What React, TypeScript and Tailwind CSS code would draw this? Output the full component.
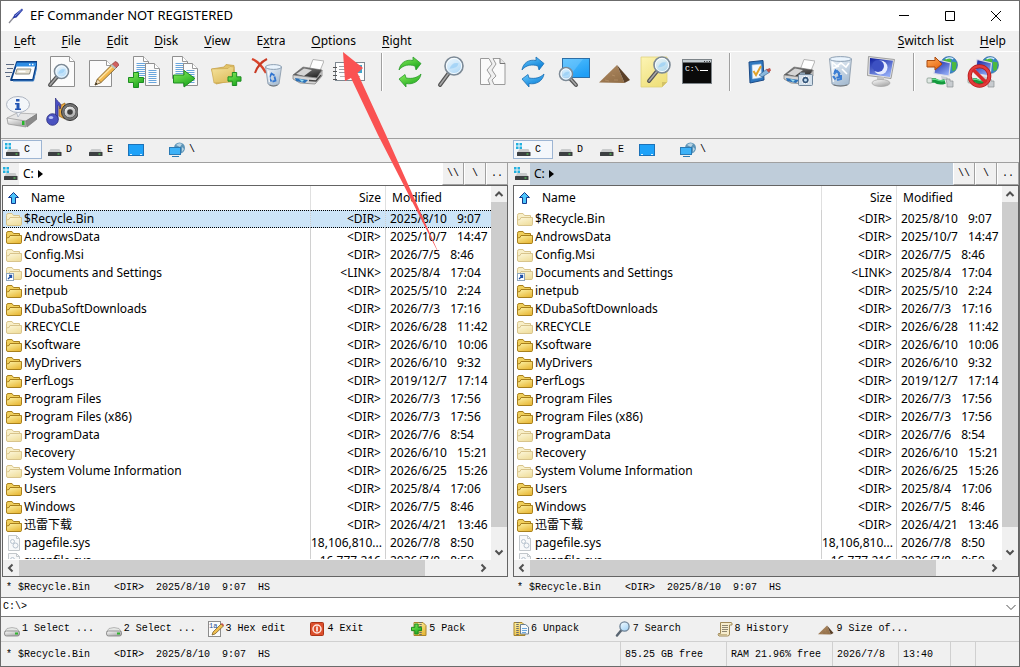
import type { ReactNode } from 'react';

const MONO = "font-['Liberation_Mono','Noto_Sans_CJK_SC',monospace] text-[10px]";

interface Entry {
  name: string;
  size: string;
  date: string;
  time: string;
  kind: 'folder' | 'hidden' | 'link' | 'file';
}

const dir = (name: string, date: string, time: string, kind: Entry['kind'] = 'folder'): Entry => ({
  name,
  size: kind === 'link' ? '<LINK>' : '<DIR>',
  date,
  time,
  kind,
});

const ENTRIES: Entry[] = [
  dir('$Recycle.Bin', '2025/8/10', '9:07', 'hidden'),
  dir('AndrowsData', '2025/10/7', '14:47'),
  dir('Config.Msi', '2026/7/5', '8:46', 'hidden'),
  dir('Documents and Settings', '2025/8/4', '17:04', 'link'),
  dir('inetpub', '2025/5/10', '2:24'),
  dir('KDubaSoftDownloads', '2026/7/3', '17:16'),
  dir('KRECYCLE', '2026/6/28', '11:42', 'hidden'),
  dir('Ksoftware', '2026/6/10', '10:06'),
  dir('MyDrivers', '2026/6/10', '9:32'),
  dir('PerfLogs', '2019/12/7', '17:14'),
  dir('Program Files', '2026/7/3', '17:56'),
  dir('Program Files (x86)', '2026/7/3', '17:56'),
  dir('ProgramData', '2026/7/6', '8:54', 'hidden'),
  dir('Recovery', '2026/6/10', '15:21', 'hidden'),
  dir('System Volume Information', '2026/6/25', '15:26', 'hidden'),
  dir('Users', '2025/8/4', '17:06'),
  dir('Windows', '2026/7/5', '8:46'),
  dir('迅雷下载', '2026/4/21', '13:46'),
  { name: 'pagefile.sys', size: '18,106,810...', date: '2026/7/8', time: '8:50', kind: 'file' },
  { name: 'swapfile.sys', size: '16,777,216', date: '2026/7/8', time: '8:50', kind: 'file' },
];

/* ---------- drawing parts ---------- */

function Gradients() {
  const defs: [string, string, string][] = [
    ['green', '#8af05c', '#1fa81f'],
    ['blue', '#6ccbff', '#0b7fd6'],
    ['screen', '#55c1ff', '#1f9ef5'],
    ['navy', '#0c1c9c', '#8fa8f4'],
    ['lens', '#f4fbff', '#a9d6f7'],
    ['folder', '#fdf3a8', '#e9bb3c'],
    ['pale', '#fdf8dc', '#f0dfa0'],
    ['sand', '#f6e4a0', '#dfbf62'],
    ['metal', '#ffffff', '#a8a8a8'],
    ['dark', '#8d8d8d', '#2b2b2b'],
    ['brown', '#b08a62', '#94714a'],
    ['orange', '#ffb060', '#ec6a14'],
    ['glass', '#eef4fa', '#a8bdd2'],
    ['note', '#fdf4b4', '#efe07c'],
  ];
  return (
    <svg className="absolute h-0 w-0" aria-hidden="true">
      <defs>
        {defs.map(([id, from, to]) => (
          <linearGradient key={id} id={id} x1="0" y1="0" x2="0.6" y2="1">
            <stop offset="0" stopColor={from} />
            <stop offset="1" stopColor={to} />
          </linearGradient>
        ))}
      </defs>
    </svg>
  );
}

function Svg({ size = 32, children }: { size?: 16 | 32; children: ReactNode }) {
  return (
    <svg
      viewBox={`0 0 ${size} ${size}`}
      className={size === 32 ? 'h-8 w-8 shrink-0' : 'h-4 w-4 shrink-0'}
      aria-hidden="true"
    >
      {children}
    </svg>
  );
}

function Page({ x, y, w, h, lines = false }: { x: number; y: number; w: number; h: number; lines?: boolean }) {
  const rows = lines ? [7, 9, 11, 13, 15, 17, 19].filter((r) => r < h - 2) : [];
  return (
    <g>
      <path
        d={`M${x} ${y}h${w - 5}l5 5v${h - 5}h${-w}z`}
        fill="#fbfbfb"
        stroke="#8f8f8f"
      />
      <path d={`M${x + w - 5} ${y}v5h5`} fill="#fff" stroke="#9a9a9a" />
      {rows.map((r) => (
        <path key={r} d={`M${x + 3} ${y + r}h${w - 6}`} stroke="#6aa6dc" />
      ))}
    </g>
  );
}

function Lens({ cx, cy, r, hx, hy }: { cx: number; cy: number; r: number; hx: number; hy: number }) {
  const d = Math.hypot(hx - cx, hy - cy);
  const sx = cx + ((hx - cx) / d) * r;
  const sy = cy + ((hy - cy) / d) * r;
  return (
    <g>
      <path d={`M${sx} ${sy}L${hx} ${hy}`} stroke="#555" strokeWidth="4" strokeLinecap="round" />
      <path d={`M${sx} ${sy}L${hx} ${hy}`} stroke="#a8a8a8" strokeWidth="1.5" strokeLinecap="round" />
      <circle cx={cx} cy={cy} r={r} fill="url(#lens)" fillOpacity="0.9" stroke="#7d8a96" strokeWidth="1.6" />
      <circle cx={cx} cy={cy} r={r - 1.4} fill="none" stroke="#fff" strokeOpacity="0.8" />
      <path
        d={`M${cx - r * 0.5} ${cy + r * 0.3}q${r * 0.3} ${-r * 0.8} ${r} ${-r * 0.6}q${-r * 0.1} ${r * 0.6} ${-r} ${r * 0.6}z`}
        fill="#8ec9f5"
        fillOpacity="0.6"
      />
    </g>
  );
}

function Plus({ cx, cy, s }: { cx: number; cy: number; s: number }) {
  const a = s / 6;
  const b = s / 2;
  const l = b - a;
  return (
    <path
      d={`M${cx - a} ${cy - b}h${2 * a}v${l}h${l}v${2 * a}h${-l}v${l}h${-2 * a}v${-l}h${-l}v${-2 * a}h${l}z`}
      fill="url(#green)"
      stroke="#1c8c22"
    />
  );
}

function Cycle({ fill, stroke }: { fill: string; stroke: string }) {
  return (
    <g fill={fill} stroke={stroke} strokeWidth="0.8" strokeLinejoin="round">
      <path d="M5 14C6 7 12 3 19 4.500L19 1L27 7.500L22 14L21 10C15 8 9 9 5 14z" />
      <path d="M27 18C26 25 19 29 12 27.500L12 31L5 23L11 18.500L12 22C18 23 23 22 27 18z" />
    </g>
  );
}

function Printer() {
  return (
    <g>
      <path d="M17 14L21 3.500L32 5L27 17z" fill="#fff" stroke="#a3a3a3" strokeWidth="0.8" />
      <path d="M1 19L11 11L30 14L25 22z" fill="url(#dark)" stroke="#666" strokeWidth="0.6" />
      <path d="M4 18L12 12.500L20 14L12 20z" fill="#d5d5d5" />
      <path d="M1 19L25 22L30 14V20L23 28L8 27L1 23z" fill="#d4d4d4" stroke="#777" strokeWidth="0.7" />
      <path d="M3 22L16 24L13 27L4 25z" fill="#2d72b8" />
      <path d="M7 23L12 24L10 26z" fill="#9be0f2" />
      <path d="M17 24.500L24 25L29 19" fill="none" stroke="#444" strokeWidth="1.4" />
    </g>
  );
}

function Bin({ x, y, w, h }: { x: number; y: number; w: number; h: number }) {
  return (
    <g>
      <path
        d={`M${x} ${y + 2}L${x + 2.5} ${y + h - 2}Q${x + w / 2} ${y + h + 2} ${x + w - 2.5} ${y + h - 2}L${x + w} ${y + 2}z`}
        fill="url(#glass)"
        stroke="#8494a6"
        strokeWidth="0.8"
      />
      <ellipse cx={x + w / 2} cy={y + 2} rx={w / 2} ry="2.4" fill="#eaf4fd" stroke="#8296ac" strokeWidth="0.9" />
      <g fill="none" stroke="#2f74d0" strokeWidth="1.8">
        <path d={`M${x + 4} ${y + h * 0.6}l2 -4l3 2`} />
        <path d={`M${x + 9} ${y + h * 0.55}l1 4l-3 1`} />
        <path d={`M${x + 6} ${y + h * 0.78}l-2 -3`} />
      </g>
      <path d={`M${x + 3} ${y + 6}l1 ${h - 10}`} stroke="#fff" strokeWidth="1.4" strokeOpacity="0.8" />
      <path d={`M${x + 4} ${y + h - 1}Q${x + w / 2} ${y + h + 1} ${x + w - 4} ${y + h - 1}`} stroke="#6f7478" strokeWidth="1.2" fill="none" />
    </g>
  );
}

function Globe({ cx, cy, r }: { cx: number; cy: number; r: number }) {
  return (
    <g>
      <circle cx={cx} cy={cy} r={r} fill="#3787c8" stroke="#2b5f95" strokeWidth="0.6" />
      <path
        d={`M${cx - r * 0.7} ${cy - r * 0.5}q${r * 0.6} ${-r * 0.6} ${r} ${-r * 0.1}q${-r * 0.2} ${r * 0.7} ${-r * 0.6} ${r * 0.5}zM${cx + r * 0.3} ${cy - r * 0.4}l${r * 0.6} ${r * 0.1}l${-r * 0.1} ${r * 0.9}l${-r * 0.4} 1z`}
        fill="#4dba3c"
      />
      <path d={`M${cx - r * 0.4} ${cy - r * 0.7}q${r * 0.5} ${-r * 0.3} ${r * 0.9} 0`} stroke="#dff2ff" strokeWidth="1.2" fill="none" />
    </g>
  );
}

function NetPc() {
  return (
    <g>
      <Globe cx={23} cy={9} r={8.500} />
      <path d="M10 3.500L24.500 7L23 20L8 17.500z" fill="url(#navy)" stroke="#dcdce8" strokeWidth="1.2" />
      <path d="M15 20l6 1l2 3h-7z" fill="#c9ccd2" />
      <path d="M4 24.500h5q4 3 10 1" fill="none" stroke="#149a3e" strokeWidth="4.500" />
      <path d="M4 23.500h6q4 2 9 1" fill="none" stroke="#5fe08a" strokeWidth="1.2" />
      <rect x="1" y="22" width="5" height="5" rx="1" fill="#dfe8e3" stroke="#7f9488" strokeWidth="0.7" />
      <path d="M20 23h4v2h3v6h-6v-3z" fill="#c8ccd0" stroke="#8a8f94" strokeWidth="0.7" />
    </g>
  );
}

function Pencil() {
  return (
    <g>
      <path d="M8 29L10.500 23L26 7.500L30 11L14 26.500z" fill="#f3b84c" stroke="#6d5220" strokeWidth="0.8" />
      <path d="M12 23.500L27 9" stroke="#fbe3a2" strokeWidth="1.4" />
      <path d="M8 29L10.500 23L14 26.500z" fill="#f1dcb8" stroke="#6d5220" strokeWidth="0.6" />
      <path d="M8 29l1 -2.500l1.500 1.500z" fill="#222" />
      <path d="M25 8.500L28 5.500Q30.500 5.500 32 9L29 12z" fill="#d1605e" stroke="#7a3a3a" strokeWidth="0.6" />
      <path d="M24.500 9L28.500 12.500" stroke="#b8c0c4" strokeWidth="2" />
    </g>
  );
}

function Pyramid() {
  return (
    <g>
      <path d="M0 26.500L18 9L25.500 27z" fill="url(#brown)" />
      <path d="M18 9L31 24L25.500 27z" fill="#5a4028" />
      <path d="M6 24l4 1m3 -6l3 1m-1 4h4" stroke="#bd9870" strokeWidth="0.6" />
    </g>
  );
}

/* ---------- toolbar ---------- */

interface Tool {
  label: string;
  art: ReactNode;
}

const TOOLS: (Tool | null)[] = [
  {
    label: 'Run',
    art: (
      <>
        <path d="M1 8.500h8M2 12.500h6M0 16.500h7M1 20.500h4" stroke="#5c6b84" strokeWidth="1" />
        <path d="M12 6H32L28 24H6z" fill="#fff" stroke="#0b3f86" strokeWidth="1.800" strokeLinejoin="round" />
        <path d="M12 6.500H31.500L30.700 10.500H10.500z" fill="#2f8de4" />
        <path d="M24 8.500h1.500M27 8.500h1.500" stroke="#fff" strokeWidth="1.4" />
        <path d="M12 13H26L24.500 18H10.500z" fill="#e9e3d2" stroke="#8f8f84" />
        <path d="M13.500 15.500h7" stroke="#fff" strokeWidth="1.5" />
        <path d="M8 25H28.500L32.500 8" fill="none" stroke="#3d80c8" />
      </>
    ),
  },
  {
    label: 'View',
    art: (
      <>
        <Page x={4.5} y={0.5} w={24} h={30} />
        <Lens cx={15.5} cy={15.5} r={7} hx={4} hy={29} />
      </>
    ),
  },
  {
    label: 'Edit',
    art: (
      <>
        <Page x={2.5} y={4.5} w={22} h={26} />
        <Pencil />
      </>
    ),
  },
  {
    label: 'Copy',
    art: (
      <>
        <Page x={5.5} y={0.5} w={15} h={22} lines />
        <Page x={17.5} y={7.5} w={14} h={22} lines />
        <Plus cx={8} cy={24} s={15} />
      </>
    ),
  },
  {
    label: 'Move',
    art: (
      <>
        <Page x={3.5} y={0.5} w={15} h={22} lines />
        <Page x={14.5} y={7.5} w={14} h={22} lines />
        <path d="M4.500 19H15V14.500L26 22.500L15 31V27H4.500z" fill="url(#green)" stroke="#1c8c22" />
      </>
    ),
  },
  {
    label: 'New folder',
    art: (
      <>
        <path d="M1.500 13L14 11L16 8.500L24 9.500L25 24L6 28z" fill="#e2c368" stroke="#c09a3e" strokeWidth="0.7" />
        <path d="M1.500 13L18 12.500L20 10.500L24 11L22 26L4 27z" fill="url(#sand)" stroke="#cba850" strokeWidth="0.7" />
        <Plus cx={24.5} cy={23} s={13} />
      </>
    ),
  },
  {
    label: 'Delete',
    art: (
      <>
        <path d="M1 3C6 5 11 10 15 17" stroke="#d8452c" strokeWidth="2.400" fill="none" />
        <path d="M16 3C10 6 6 11 4 17" stroke="#c93a24" strokeWidth="2" fill="none" />
        <Bin x={14.500} y={9} w={16} h={21} />
      </>
    ),
  },
  { label: 'Print', art: <Printer /> },
  {
    label: 'Properties',
    art: (
      <>
        <rect x="2.500" y="6.500" width="29" height="18" fill="#fdfdfd" stroke="#7d8790" />
        <path d="M0 11.500h4M0 15.500h4M0 19.500h4M0 23.500h4" stroke="#555" />
        <path d="M6 10.500h9M6 13.500h9M6 16.500h7" stroke="#9aa0a8" />
        <rect x="19" y="9" width="10" height="8" fill="#3fa6cc" />
        <path d="M7 20.500h20" stroke="#b4b4b4" />
      </>
    ),
  },
  null,
  { label: 'Refresh', art: <Cycle fill="url(#green)" stroke="#2c9a2c" /> },
  { label: 'Search', art: <Lens cx={19} cy={10} r={9} hx={5} hy={29} /> },
  {
    label: 'Split',
    art: (
      <>
        <path d="M4.500 2.500H13L16 8L11 14L15 20L12 24L14 28.500H4.500z" fill="#fafafa" stroke="#9a9a9a" />
        <path d="M17 2.500H24L29 7.500V28.500H18L16 24L20 20L16 14L20 8z" fill="#fafafa" stroke="#9a9a9a" />
        <path d="M24 2.500V7.500H29" fill="#e8e8e8" stroke="#777" />
      </>
    ),
  },
  { label: 'Synchronize', art: <Cycle fill="url(#blue)" stroke="#1b6fb4" /> },
  {
    label: 'Find on desktop',
    art: (
      <>
        <rect x="4.500" y="2.500" width="27" height="19" fill="url(#screen)" stroke="#2c6ea6" />
        <path d="M5 3H25L11 21H5z" fill="#8fd4ff" fillOpacity="0.35" />
        <Lens cx={8} cy={18} r={6.5} hx={18} hy={29} />
      </>
    ),
  },
  { label: 'Directory size', art: <Pyramid /> },
  {
    label: 'Find text',
    art: (
      <>
        <path d="M1 1H27V26L22 31H1z" fill="url(#note)" stroke="#e0d27c" strokeWidth="0.8" />
        <path d="M22 31V26H27z" fill="#d3c268" />
        <Lens cx={22} cy={9} r={8} hx={9} hy={25} />
      </>
    ),
  },
  {
    label: 'Console',
    art: (
      <>
        <rect x="1.500" y="3.500" width="29" height="24" fill="#0a0a0a" stroke="#7d8489" />
        <rect x="2" y="4" width="28" height="2.500" fill="#c4ccd0" />
        <path d="M23 5.500h1M25.500 5.500h1M28 5.500h1" stroke="#333" />
        <text x="4" y="15" fill="#fff" fontSize="8" fontFamily="Liberation Mono, monospace">
          C:\
        </text>
        <path d="M19 14.500h8" stroke="#fff" />
      </>
    ),
  },
  null,
  {
    label: 'Options',
    art: (
      <>
        <path d="M7 6L21 4.500L22 24L8 27z" fill="#2f78c0" stroke="#1b4a86" strokeLinejoin="round" />
        <path d="M10 9L19 8L19.500 21.500L10.500 23z" fill="#f3f8fd" stroke="#9fc0e0" strokeWidth="0.6" />
        <path d="M11.500 15L14 19L19 10" fill="none" stroke="#e2a32c" strokeWidth="2" />
        <path d="M17 19L25 13L28 16L20 21z" fill="#8ab8de" stroke="#3d6a98" strokeWidth="0.7" />
        <path d="M24 13.500L28 12L29 14.500L26.500 16.500z" fill="#c0524a" />
      </>
    ),
  },
  {
    label: 'Screen print',
    art: (
      <>
        <Printer />
        <rect x="15.500" y="18.500" width="14" height="11" rx="1" fill="#d3e0ec" stroke="#6f8498" />
        <rect x="17" y="16.500" width="5" height="2" fill="#8aa0b4" />
        <circle cx="22.500" cy="24" r="3.800" fill="#34557a" stroke="#fff" />
        <circle cx="22.500" cy="24" r="1.500" fill="#c4e0f4" />
      </>
    ),
  },
  {
    label: 'Recycle bin',
    art: (
      <>
        <Bin x={5.5} y={1} w={22} h={29} />
        <path d="M8 6l5 4l4 -3l5 4l3 -4M18 13l5 5M9 12l6 -2" stroke="#fff" strokeWidth="1.6" fill="none" />
        <path d="M10 18l3 -3l3 3M17 19l0 4l-4 1M11 23l-2 -3" stroke="#3f80d4" strokeWidth="2" fill="none" />
      </>
    ),
  },
  {
    label: 'Screen saver',
    art: (
      <>
        <path d="M3.500 0.500L29.500 3.500L26 22.500L2.500 19.500z" fill="#e1e1e1" stroke="#8d8d8d" strokeWidth="0.8" />
        <path d="M5 2L28 4.700L25 21L4.500 18z" fill="url(#navy)" />
        <circle cx="15.500" cy="11.500" r="7" fill="#e6ecff" />
        <circle cx="13" cy="10" r="6" fill="#3c50c2" />
        <path d="M12 21h7v5h-7z" fill="#c4c4c4" />
        <ellipse cx="16" cy="27" rx="9" ry="3.500" fill="url(#metal)" stroke="#a3a3a3" strokeWidth="0.7" />
      </>
    ),
  },
  null,
  {
    label: 'Connect network drive',
    art: (
      <>
        <NetPc />
        <path d="M1 4.500H9V1L16 8L9 14V11H1z" fill="url(#orange)" stroke="#a84a10" />
      </>
    ),
  },
  {
    label: 'Disconnect network drive',
    art: (
      <>
        <NetPc />
        <circle cx="12.500" cy="20" r="9.800" fill="none" stroke="#b01818" strokeWidth="4" />
        <circle cx="12.500" cy="20" r="9.800" fill="none" stroke="#e23c3c" strokeWidth="2.600" />
        <path d="M6 13.500L19 26.500" stroke="#d82a2a" strokeWidth="3.600" />
      </>
    ),
  },
  {
    label: 'Drive information',
    art: (
      <>
        <path d="M2 22L12 17L32 18L21 25L3 25z" fill="#e6e6e6" stroke="#a0a0a0" strokeWidth="0.7" />
        <path d="M2 22L21 25V31L3 28z" fill="url(#metal)" stroke="#8f8f8f" strokeWidth="0.7" />
        <path d="M21 25L32 18V23L22 31z" fill="#8a8a8a" stroke="#777" strokeWidth="0.7" />
        <rect x="17" y="25" width="2.500" height="4" fill="#25b52a" />
        <path d="M11 15L13 21L17 15z" fill="#eef2f8" stroke="#a5adba" strokeWidth="0.7" />
        <ellipse cx="13" cy="8.500" rx="11.500" ry="8" fill="#f3f6fa" stroke="#a5adba" strokeWidth="0.9" />
        <rect x="11" y="3" width="3.500" height="2.500" fill="#2456b4" />
        <path d="M10 7h4.500v5.500h1.500v1.500h-6v-1.500h1.500v-4h-1.500z" fill="#2456b4" />
      </>
    ),
  },
  {
    label: 'Media',
    art: (
      <>
        <path d="M13 10l6 -3v16l-6 -3z" fill="#e9a840" stroke="#9a6a1c" strokeWidth="0.8" />
        <circle cx="24" cy="16" r="8.500" fill="#777" stroke="#333" />
        <circle cx="24" cy="16" r="6" fill="url(#metal)" stroke="#555" />
        <circle cx="24" cy="16" r="2.800" fill="#3f3f3f" />
        <path d="M9.500 23V2C11 6 17 7 14 13C14 9 12 9 12 9V24z" fill="#4b4fc4" stroke="#26297c" strokeWidth="0.7" />
        <circle cx="6.500" cy="23.500" r="5.800" fill="#4a52c0" stroke="#26297c" strokeWidth="0.8" />
        <ellipse cx="5" cy="21.500" rx="2.200" ry="1.600" fill="#b9c4f8" />
      </>
    ),
  },
];

/* ---------- 16px icons ---------- */

function DriveIcon({ system = false }: { system?: boolean }) {
  return (
    <Svg size={16}>
      {system && (
        <path d="M1 1h2.500v2.500h-2.500zM4.500 1h2.500v2.500h-2.500zM1 4.500h2.500v2.500h-2.500zM4.500 4.500h2.500v2.500h-2.500z" fill="#22b1e0" />
      )}
      <path d="M4.500 7H13.500L15 10.500H2z" fill="#c9cbcc" />
      <rect x="2" y="10" width="13.500" height="4" rx="0.500" fill="#3c3f41" />
      <rect x="11.500" y="11.500" width="2" height="1" fill="#5ee65e" />
    </Svg>
  );
}

function DesktopIcon() {
  return (
    <Svg size={16}>
      <rect x="0.500" y="2.500" width="15" height="11" fill="#1ea2f8" stroke="#1c72b8" />
      <path d="M2 12.500h2M12 12.500h2" stroke="#d8f0ff" />
    </Svg>
  );
}

function NetworkIcon() {
  return (
    <Svg size={16}>
      <circle cx="10.500" cy="6" r="5.500" fill="#5e95b8" />
      <path d="M7 3q3 -3 6 -1l-2 3zM13 5l2 2l-2 3z" fill="#b9d4e4" />
      <rect x="0.500" y="5.500" width="11" height="7" fill="#3db2f8" stroke="#2a7ab4" />
      <path d="M3 14.500h7" stroke="#2a7ab4" />
    </Svg>
  );
}

function EntryIcon({ kind }: { kind: Entry['kind'] }) {
  if (kind === 'file') {
    return (
      <Svg size={16}>
        <path d="M2.500 0.500H10.500L13.500 3.500V15.500H2.500z" fill="#f8f9fa" stroke="#c3c8cc" />
        <path d="M10.500 0.500V3.500H13.500" fill="none" stroke="#c3c8cc" />
        <circle cx="6.500" cy="6.500" r="2" fill="none" stroke="#b8c4d0" />
        <circle cx="9.500" cy="10.500" r="2.500" fill="none" stroke="#b8c4d0" />
      </Svg>
    );
  }
  const faded = kind !== 'folder';
  return (
    <Svg size={16}>
      <path
        d="M0.500 13V4.500Q0.500 2.500 2 2.500H6L7.500 4.500H13.500V6.500"
        fill={faded ? '#f8efc8' : '#f0cf5c'}
        stroke={faded ? '#d8c48c' : '#a8801c'}
      />
      <path
        d="M0.500 13V9L3 8.500L4 6.500H15.500V13.500Q15.500 14.500 14 14.500H2Q0.500 14.500 0.500 13z"
        fill={faded ? 'url(#pale)' : 'url(#folder)'}
        stroke={faded ? '#d8c48c' : '#a8801c'}
      />
      {kind === 'link' && (
        <>
          <rect x="0.500" y="8.500" width="7" height="7" fill="#fff" stroke="#8fa6bc" />
          <path d="M2 14L5.500 10.500M3 10.500H5.500V13" fill="none" stroke="#1d4fa8" strokeWidth="1.300" />
        </>
      )}
    </Svg>
  );
}

function SmallDisk() {
  return (
    <Svg size={16}>
      <path d="M3 7.500Q8 5.500 13 7.500L15.500 11H0.500z" fill="#e4e6e4" stroke="#a0a0a0" strokeWidth="0.700" />
      <rect x="0.500" y="10" width="15" height="5" rx="2" fill="url(#metal)" stroke="#7f7f7f" strokeWidth="0.800" />
      <rect x="11" y="11.500" width="3" height="2" fill="#2fb42f" />
    </Svg>
  );
}

const KEYS: Tool[] = [
  { label: '1 Select ...', art: <SmallDisk /> },
  { label: '2 Select ...', art: <SmallDisk /> },
  {
    label: '3 Hex edit',
    art: (
      <Svg size={16}>
        <rect x="0.500" y="0.500" width="12" height="15" fill="#fbfbfb" stroke="#8c8c8c" />
        <text x="1" y="7" fontSize="7" fill="#1d4f94" fontFamily="Liberation Mono, monospace">1a</text>
        <path d="M4 14L5 11L13 3L15.500 5L7 13z" fill="#f0be4e" stroke="#6f5420" strokeWidth="0.700" />
        <path d="M13 3L14 2L16 4L15.500 5z" fill="#cc4848" />
      </Svg>
    ),
  },
  {
    label: '4 Exit',
    art: (
      <Svg size={16}>
        <rect x="1.500" y="1.500" width="13" height="13" rx="1" fill="#dc4f2c" stroke="#ab3417" />
        <circle cx="8" cy="8" r="4" fill="none" stroke="#ffe7df" strokeWidth="1.500" />
        <path d="M8 5.500v5" stroke="#fff" strokeWidth="1.500" />
      </Svg>
    ),
  },
  {
    label: '5 Pack',
    art: (
      <Svg size={16}>
        <path d="M3 1.500h9l3 3v10h-12z" fill="url(#folder)" stroke="#a8842c" />
        <path d="M9.500 1v14" stroke="#6d6d6d" strokeWidth="2.500" strokeDasharray="1 1" />
        <Plus cx={5.5} cy={8} s={10} />
      </Svg>
    ),
  },
  {
    label: '6 Unpack',
    art: (
      <Svg size={16}>
        <path d="M1 1.500h8l3 3v10h-11z" fill="url(#folder)" stroke="#a8842c" />
        <path d="M4.500 1v14" stroke="#6d6d6d" strokeWidth="2.500" strokeDasharray="1 1" />
        <path d="M7.500 3.500h5l3 2.500v7h-8z" fill="#f3f8fc" stroke="#6b7f92" />
        <path d="M9 7.500h5M9 9.500h5M9 11.500h4" stroke="#6aa6dc" />
      </Svg>
    ),
  },
  {
    label: '7 Search',
    art: (
      <Svg size={16}>
        <path d="M6.500 9L2 14.500" stroke="#5a6672" strokeWidth="2.500" strokeLinecap="round" />
        <circle cx="9.500" cy="5.500" r="4.600" fill="url(#lens)" stroke="#6e8296" strokeWidth="1.300" />
      </Svg>
    ),
  },
  {
    label: '8 History',
    art: (
      <Svg size={16}>
        <path d="M3.500 1.500H14Q15.500 1.500 15 4H12.500V13Q12.500 15 10.500 15H2Q0.500 14 1.500 12.500H3.500z" fill="#f7edcd" stroke="#a08a58" />
        <path d="M5 4.500h6M5 6.500h6M5 8.500h6M5 10.500h5" stroke="#8d8672" />
        <path d="M2 13.500h8" stroke="#c9b98a" />
      </Svg>
    ),
  },
  {
    label: '9 Size of...',
    art: (
      <svg viewBox="0 0 32 32" className="h-4 w-4 shrink-0" aria-hidden="true">
        <Pyramid />
      </svg>
    ),
  },
];

/* ---------- page parts ---------- */

function MenuItem({ label, hot = 0 }: { label: string; hot?: number }) {
  return (
    <button type="button" className="px-[13px] leading-5">
      {label.slice(0, hot)}
      <span className="underline underline-offset-2">{label[hot]}</span>
      {label.slice(hot + 1)}
    </button>
  );
}

function DriveBar() {
  return (
    <div className={`flex h-[23px] items-start gap-px py-px pl-px ${MONO}`}>
      <button type="button" className="flex h-[19px] w-10 items-center gap-1 border border-[#9db5d3] bg-[#f4f7fb] pl-px">
        <DriveIcon system />C
      </button>
      {['D', 'E'].map((d) => (
        <button key={d} type="button" className="flex h-[19px] w-10 items-center gap-1 pl-[3px]">
          <DriveIcon />
          {d}
        </button>
      ))}
      <button type="button" aria-label="Desktop" className="flex h-[19px] w-10 items-center pl-[3px]">
        <DesktopIcon />
      </button>
      <button type="button" className="flex h-[19px] w-10 items-center gap-1 pl-[3px]">
        <NetworkIcon />\
      </button>
    </div>
  );
}

type Direction = 'up' | 'down' | 'left' | 'right';

const CHEVRONS: Record<Direction, string> = {
  up: 'M4.500 10L8 6.500L11.500 10',
  down: 'M4.500 6.500L8 10L11.500 6.500',
  left: 'M9.500 4.500L6 8L9.500 11.500',
  right: 'M6.500 4.500L10 8L6.500 11.500',
};

function ScrollButton({ to }: { to: Direction }) {
  return (
    <button type="button" aria-label={`Scroll ${to}`} className="h-4 w-4 shrink-0">
      <Svg size={16}>
        <path d={CHEVRONS[to]} fill="none" stroke="#505050" strokeWidth="2" />
      </Svg>
    </button>
  );
}

function Pane({ active }: { active: boolean }) {
  return (
    <section className="flex min-h-0 min-w-0 flex-col">
      <div className="flex h-[22px] items-stretch">
        <div className="flex w-[17px] items-center">
          <DriveIcon system />
        </div>
        <div className={active ? 'flex flex-1 items-center bg-white pl-1' : 'flex flex-1 items-center bg-[#bfcdda] pl-1'}>
          C:
          <svg viewBox="0 0 5 8" className="ml-1 h-2 w-[5px]" aria-hidden="true">
            <path d="M0 0L5 4L0 8z" />
          </svg>
        </div>
        {['\\\\', '\\', '..'].map((t) => (
          <button key={t} type="button" className={`w-[22px] border-r border-b border-l border-r-[#a0a0a0] border-b-[#a0a0a0] border-l-white ${MONO}`}>
            {t}
          </button>
        ))}
      </div>

      <div className="flex min-h-0 flex-1 flex-col border border-[#646464]">
        <div className="flex min-h-0 flex-1">
          <div className="min-w-0 flex-1 overflow-hidden border-b border-white bg-white">
            <table className="w-full table-fixed border-separate border-spacing-0 whitespace-nowrap">
              <colgroup>
                <col />
                <col className="w-[75px]" />
                <col className="w-[105px]" />
              </colgroup>
              <thead>
                <tr className="h-6 text-left">
                  <th className="border-r border-[#e0e0e0] p-0 pl-1 font-normal">
                    <span className="flex items-center gap-2.5">
                      <svg viewBox="0 0 14 14" className="h-3.5 w-3.5" aria-hidden="true">
                        <path d="M6.500 1.500L11.500 6.500H8.500V12.500H4.500V6.500H1.500z" fill="#4cc4fa" stroke="#12388c" />
                      </svg>
                      Name
                    </span>
                  </th>
                  <th className="border-r border-[#e0e0e0] p-0 pr-1 text-right font-normal">Size</th>
                  <th className="p-0 pl-1.5 font-normal">Modified</th>
                </tr>
              </thead>
              <tbody>
                {ENTRIES.map((e, i) => {
                  const cell =
                    active && i === 0
                      ? 'h-[18px] border-y border-dotted border-y-black bg-[#cce4f7] p-0 leading-4'
                      : 'h-[18px] p-0 leading-[18px]';
                  return (
                    <tr key={e.name}>
                      <td className={`${cell} border-r border-r-[#d0d0d0] pl-[3px]`}>
                        <span className="flex h-4 items-center gap-0.5">
                          <EntryIcon kind={e.kind} />
                          {e.name}
                        </span>
                      </td>
                      <td className={`${cell} border-r border-r-[#d0d0d0] pr-1 text-right`}>{e.size}</td>
                      <td className={`${cell} pl-1`}>
                        {e.date}
                        <span className="ml-2.5">{e.time}</span>
                      </td>
                    </tr>
                  );
                })}
              </tbody>
            </table>
          </div>
          <div className="flex w-4 flex-col bg-[#f0f0f0]">
            <ScrollButton to="up" />
            <div className="flex-1">
              <div className="h-[95%] bg-[#cdcdcd]" />
            </div>
            <ScrollButton to="down" />
          </div>
        </div>
        <div className="flex h-4 bg-[#f0f0f0]">
          <ScrollButton to="left" />
          <div className="flex-1">
            <div className="h-full w-[89%] bg-[#cdcdcd]" />
          </div>
          <ScrollButton to="right" />
          <div className="w-4" />
        </div>
      </div>

      <SelectionInfo />
    </section>
  );
}

function SelectionInfo() {
  return (
    <div className={`flex h-5 items-center pt-px pl-1 whitespace-pre ${MONO}`}>
      {'* $Recycle.Bin    <DIR>  2025/8/10  9:07  HS'}
    </div>
  );
}

export default function App() {
  return (
    <div className="relative flex h-screen flex-col overflow-hidden border border-[#6b6b6b] bg-[#f0f0f0] font-['Noto_Sans','Noto_Sans_CJK_SC',sans-serif] text-xs text-black">
      <Gradients />

      <header className="flex h-[30px] shrink-0 items-center bg-white pl-[7px]">
        <Svg size={16}>
          <path d="M1 15L6 9" stroke="#8a8a94" strokeWidth="1.300" />
          <path d="M4.500 10.500L6.500 6.500L14 0.500L15 2L8.500 9.500z" fill="#2b3ca8" />
          <path d="M7 8L13.500 2" stroke="#7f94e0" />
        </Svg>
        <h1 className="ml-1.5 flex-1 text-[13px]">EF Commander NOT REGISTERED</h1>
        {[
          ['Minimize', 'M3 7.500H13'],
          ['Maximize', 'M3.500 3.500H12.500V12.500H3.500z'],
          ['Close', 'M3 3L13 13M13 3L3 13'],
        ].map(([label, d]) => (
          <button key={label} type="button" aria-label={label} className="flex h-full w-[46px] items-center justify-center">
            <Svg size={16}>
              <path d={d} fill="none" stroke="#000" />
            </Svg>
          </button>
        ))}
      </header>

      <nav className="flex h-[21px] shrink-0 border-b border-white">
        <MenuItem label="Left" />
        <MenuItem label="File" />
        <MenuItem label="Edit" />
        <MenuItem label="Disk" />
        <MenuItem label="View" />
        <MenuItem label="Extra" hot={1} />
        <MenuItem label="Options" />
        <MenuItem label="Right" />
        <div className="flex-1" />
        <MenuItem label="Switch list" />
        <MenuItem label="Help" />
      </nav>

      <div className="flex shrink-0 flex-wrap pb-1.5">
        {TOOLS.map((t, i) =>
          t ? (
            <button key={i} type="button" aria-label={t.label} className="flex h-10 w-[41px] items-center pl-1">
              <Svg>{t.art}</Svg>
            </button>
          ) : (
            <div key={i} className="flex h-10 w-5 justify-center py-px pl-1">
              <div className="w-0.5 border-r border-l border-l-[#a0a0a0] border-r-white" />
            </div>
          ),
        )}
      </div>

      <div className="grid shrink-0 grid-cols-2 gap-1 border-y border-[#a0a0a0]">
        <DriveBar />
        <DriveBar />
      </div>

      <main className="grid min-h-0 flex-1 grid-cols-2 grid-rows-[minmax(0,1fr)] gap-[5px] pl-px">
        <Pane active />
        <Pane active={false} />
      </main>

      <div className={`flex h-5 shrink-0 items-center border-y border-[#7a7a7a] bg-white pl-0.5 ${MONO}`}>
        <label htmlFor="command">C:\&gt;</label>
        <input id="command" className="min-w-0 flex-1 outline-none" />
        <button type="button" aria-label="Command history">
          <Svg size={16}>
            <path d="M3.500 6L8 10.500L12.500 6" fill="none" stroke="#505050" />
          </Svg>
        </button>
      </div>

      <div className={`grid h-6 shrink-0 grid-cols-10 ${MONO}`}>
        {KEYS.map((k) => (
          <button key={k.label} type="button" className="flex items-center gap-0.5 pl-[3px] whitespace-nowrap">
            {k.art}
            {k.label}
          </button>
        ))}
      </div>

      <footer className={`flex h-[25px] shrink-0 items-stretch border-t border-[#d0d0d0] whitespace-nowrap ${MONO}`}>
        <div className="flex flex-1 items-center pl-px">
          <SelectionInfo />
        </div>
        <div className="flex w-[106px] items-center border-l border-[#d0d0d0] pt-px pl-1">85.25 GB free</div>
        <div className="flex w-[106px] items-center border-l border-[#d0d0d0] pt-px pl-1">RAM 21.96% free</div>
        <div className="flex w-[66px] items-center border-l border-[#d0d0d0] pt-px pl-1">2026/7/8</div>
        <div className="flex w-[52px] items-center border-l border-[#d0d0d0] pt-px pl-1">13:40</div>
        <div className="w-[25px] border-l border-[#d0d0d0]" />
        <div className="w-11 border-l border-[#d0d0d0]" />
      </footer>

      {/* pointer drawn over the window, aimed at the Options menu */}
      <svg viewBox="0 0 98 206" className="pointer-events-none absolute top-[50px] left-[341px] h-[206px] w-[98px]" aria-hidden="true">
        <path d="M1 1L21 17L15.500 22L44 84L98 205L36 84L9 27L3 30z" fill="#fa5252" />
      </svg>
    </div>
  );
}
